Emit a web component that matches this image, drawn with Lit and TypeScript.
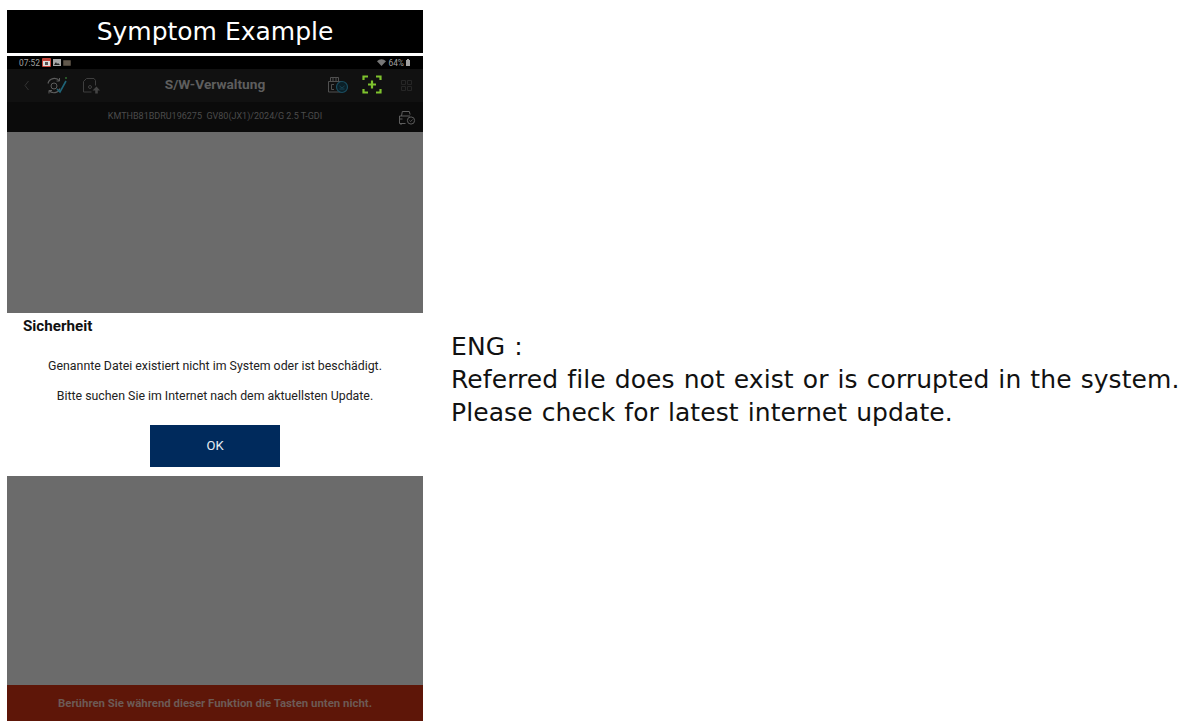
import { LitElement, html, css } from "lit";
import { customElement } from "lit/decorators.js";

@customElement("app-root")
export class AppRoot extends LitElement {
  static styles = css`
    :host { display: block; width: 1181px; height: 727px; background: #fff; overflow: hidden; }
    .page { display: flex; height: 727px; box-sizing: border-box; padding: 10px 0 6px 7px; }
    .left { width: 416px; display: flex; flex-direction: column; flex: none; }
    .banner { height: 43px; background: #000; color: #fff; display: flex; align-items: center; justify-content: center;
      font: 25px "DejaVu Sans", sans-serif; flex: none; }
    .phone { margin-top: 3px; flex: 1; display: flex; flex-direction: column; font-family: Roboto, sans-serif; min-height: 0; }
    .status { height: 13px; background: #000; display: flex; align-items: center; justify-content: space-between; padding: 0 13px 0 12px;
      color: #a0a0a0; font-size: 8.4px; flex: none; }
    .status .g { display: flex; align-items: center; gap: 2px; }
    .appbar { height: 33px; background: #111; display: flex; align-items: center; position: relative; flex: none; }
    .title { position: absolute; inset: 0 0 3px 0; display: flex; align-items: center; justify-content: center; color: #5e5e5e; font-weight: 700; font-size: 13.7px; }
    .ic { position: absolute; top: -1px; }
    .vin { height: 30px; background: #0b0b0b; display: flex; align-items: center; justify-content: center; color: #4c4c4c; font-size: 9px; position: relative; flex: none; padding-bottom: 2px; box-sizing: border-box; }
    .gray { background: #6b6b6b; }
    .gray.top { height: 181px; flex: none; }
    .gray.bottom { flex: 1; }
    .dialog { height: 163px; background: #fff; flex: none; display: flex; flex-direction: column; }
    .dlg-title { font-weight: 700; font-size: 15.2px; color: #111; padding: 5px 0 0 16px; line-height: 17px; }
    .msg { text-align: center; font-size: 12.35px; color: #222; line-height: 14px; }
    .m1 { margin-top: 24px; }
    .m2 { margin-top: 16px; }
    .ok { width: 130px; height: 42px; margin: 21.5px auto 0; background: #002a5c; color: #e8edf3; font-size: 13px; display: flex; align-items: center; justify-content: center; }
    .warn { height: 36px; background: #5e1608; color: #6d5a55; font-weight: 700; font-size: 11.4px; display: flex; align-items: center; justify-content: center; flex: none; }
    .right { margin-left: 28px; align-self: flex-start; margin-top: 320px; font: 25px/33px "DejaVu Sans", sans-serif; letter-spacing: .08px; word-spacing: 1px; color: #111; white-space: nowrap; }
    svg { display: block; }
  `;

  render() {
    return html`<div class="page">
      <div class="left">
        <div class="banner">Symptom Example</div>
        <div class="phone">
          <div class="status">
            <div class="g"><span>07:52</span>
              <svg width="9" height="9" viewBox="0 0 9 9"><rect width="9" height="9" rx="1" fill="#c0453a"/><rect x="1" y="3" width="7" height="5" fill="#ddd"/><rect x="3" y="4" width="3" height="3" fill="#555"/></svg>
              <svg width="8" height="8" viewBox="0 0 8 8"><rect width="8" height="7" fill="#a8a8a8"/><path d="M1 6l2-3 1 2 1-1 2 2z" fill="#222"/></svg>
              <svg width="8" height="8" viewBox="0 0 8 8"><rect y="1" width="8" height="6" rx="1" fill="#4a4238"/><path d="M1 3h6M1 5h6" stroke="#8a8070" stroke-width=".7"/></svg>
            </div>
            <div class="g">
              <svg width="9" height="7" viewBox="0 0 9 7"><path d="M0 2.2a6.4 6.4 0 0 1 9 0L4.500 7z" fill="#777"/></svg>
              <span>64%</span>
              <svg width="4" height="7" viewBox="0 0 4 7"><path d="M1 0h2v1h1v6H0V1h1z" fill="#a0a0a0"/></svg>
            </div>
          </div>
          <div class="appbar">
            <div class="title">S/W-Verwaltung</div>
            <svg class="ic" style="left:15px" width="10" height="33" viewBox="0 0 10 33"><path d="M6.500 13l-3.500 4.500L6.500 22" fill="none" stroke="#333" stroke-width="1"/></svg>
            <svg class="ic" style="left:40px" width="22" height="33" viewBox="0 0 22 33"><path d="M1 15.500A6.500 6.500 0 0 1 12.500 13M13 20.500A6.500 6.500 0 0 1 2 22.500" fill="none" stroke="#5c5c5c" stroke-width="1.200"/><path d="M12.500 10v3h-3M2 25.500v-3h3" fill="none" stroke="#5c5c5c"/><circle cx="7" cy="18" r="3" fill="none" stroke="#5c5c5c" stroke-width="1"/><path d="M10 21l3 3 6-11" fill="none" stroke="#1f6478" stroke-width="1.600"/><circle cx="19" cy="10" r="1" fill="#2f6b2f"/></svg>
            <svg class="ic" style="left:75px" width="20" height="33" viewBox="0 0 20 33"><path d="M4.500 10.500h7.500l1.500 2v5M4.500 10.500l-3 3v10.500h8" fill="none" stroke="#3f3f3f" stroke-width="1"/><circle cx="8" cy="19" r="1.500" fill="none" stroke="#3f3f3f"/><path d="M14.500 18.500l3.500 4h-2.200v3h-2.600v-3H10.500z" fill="#444"/></svg>
            <svg class="ic" style="left:320px" width="24" height="33" viewBox="0 0 24 33"><path d="M1.500 13.500h13v10.500h-13zM3.500 13.500v-4h8v4M6 9.500v4M9 9.500v4" fill="none" stroke="#505050"/><path d="M7 16.500H4.500v5H7" fill="none" stroke="#505050"/><circle cx="15" cy="19" r="5.500" fill="#0b2028" stroke="#1a4d60" stroke-width="1.200"/><path d="M12.500 18l2.500 2 2.500-2M12.500 21h5" fill="none" stroke="#1a4d60" stroke-width=".8"/></svg>
            <svg class="ic" style="left:355px" width="20" height="33" viewBox="0 0 20 33"><path d="M1.500 12v-3.500h4.500M14 8.500h4.500V12M1.500 21v3.500h4.500M14 24.500h4.500V21" fill="none" stroke="#7ec22e" stroke-width="2.200"/><path d="M10 12.500v8M6 16.500h8" stroke="#7ec22e" stroke-width="2.200"/></svg>
            <svg class="ic" style="left:394px" width="12" height="33" viewBox="0 0 12 33"><path d="M.5 12.500h4v4h-4zM6.500 12.500h4v4h-4zM.5 18.500h4v4h-4zM6.500 18.500h4v4h-4z" fill="none" stroke="#262626"/></svg>
          </div>
          <div class="vin"><span>KMTHB81BDRU196275&nbsp;&nbsp;GV80(JX1)/2024/G 2.5 T-GDI</span>
            <svg class="ic" style="left:391px" width="18" height="30" viewBox="0 0 18 30"><path d="M3.500 15l.8-4.500h7l.8 3M1.500 15h10.500M1.500 15v7.500h6M3 22.500v1.500M1.500 18h3" fill="none" stroke="#5e5e5e"/><circle cx="13" cy="19.500" r="3.600" fill="none" stroke="#5e5e5e"/><path d="M11.500 19.500l1.200 1 1.800-2" fill="none" stroke="#5e5e5e" stroke-width=".8"/></svg>
          </div>
          <div class="gray top"></div>
          <div class="dialog">
            <div class="dlg-title">Sicherheit</div>
            <div class="msg m1">Genannte Datei existiert nicht im System oder ist beschädigt.</div>
            <div class="msg m2">Bitte suchen Sie im Internet nach dem aktuellsten Update.</div>
            <div class="ok">OK</div>
          </div>
          <div class="gray bottom"></div>
          <div class="warn">Berühren Sie während dieser Funktion die Tasten unten nicht.</div>
        </div>
      </div>
      <div class="right">ENG :<br>Referred file does not exist or is corrupted in the system.<br>Please check for latest internet update.</div>
    </div>`;
  }
}
